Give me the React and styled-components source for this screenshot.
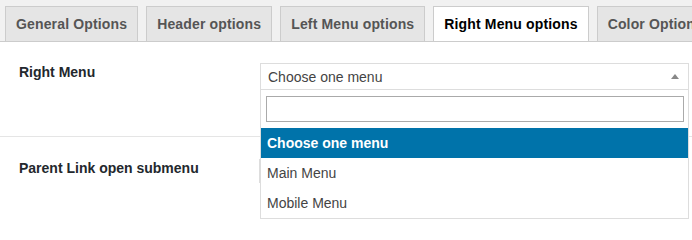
import React from 'react';
import styled, { createGlobalStyle } from 'styled-components';

const GlobalStyle = createGlobalStyle`
  body {
    margin: 0;
    background: #fff;
    font-family: "Liberation Sans", Arial, sans-serif;
    color: #444;
  }
`;

const TabBar = styled.div`
  display: flex;
  gap: 8px;
  padding: 6px 0 0 5px;
  background: #f1f1f1;
  border-bottom: 1px solid #ccc;
  white-space: nowrap;
  overflow: hidden;
`;

const Tab = styled.div`
  flex: none;
  padding: 5px 10px;
  margin-bottom: -1px;
  font-size: 14px;
  line-height: 24px;
  font-weight: 700;
  letter-spacing: 0.15px;
  color: ${p => (p.active ? '#000' : '#555')};
  background: ${p => (p.active ? '#fff' : '#e5e5e5')};
  border: 1px solid #ccc;
  border-bottom-color: ${p => (p.active ? '#fff' : '#ccc')};
`;

const Row = styled.div`
  display: grid;
  grid-template-columns: 241px 1fr;
  align-items: start;
  height: ${p => p.height}px;
  padding: 21px 0 0 19px;
  box-sizing: border-box;
  border-bottom: ${p => (p.last ? 'none' : '1px solid #e5e5e5')};
`;

const Label = styled.div`
  font-size: 14px;
  line-height: 18px;
  font-weight: 700;
  color: #23282d;
  padding-top: ${p => p.offset || 0}px;
`;

const SelectWrap = styled.div`
  position: relative;
  width: 429px;
`;

const Selection = styled.div`
  display: flex;
  align-items: center;
  justify-content: space-between;
  height: 27px;
  box-sizing: border-box;
  padding: 0 9px 0 7px;
  border: 1px solid #ddd;
  font-size: 14px;
  color: #444;
`;

const Arrow = styled.span`
  width: 0;
  height: 0;
  border-left: 4px solid transparent;
  border-right: 4px solid transparent;
  border-bottom: 5px solid #888;
`;

const Dropdown = styled.div`
  position: absolute;
  top: 100%;
  left: 0;
  right: 0;
  z-index: 5;
  background: #fff;
  border: 1px solid #ddd;
  border-top: none;
`;

const SearchBox = styled.div`
  padding: 6px 4px 6px 5px;
`;

const SearchInput = styled.input`
  display: block;
  width: 100%;
  height: 26px;
  box-sizing: border-box;
  border: 1px solid #aaa;
  outline: none;
  font: inherit;
`;

const Option = styled.div`
  height: 30px;
  box-sizing: border-box;
  padding: 6px;
  font-size: 14px;
  line-height: 18px;
  font-weight: ${p => (p.highlighted ? 700 : 400)};
  color: ${p => (p.highlighted ? '#fff' : '#444')};
  background: ${p => (p.highlighted ? '#0073aa' : '#fff')};
`;

const PlainControl = styled.div`
  margin: 1px 0 0 -1px;
  width: 300px;
  height: 22px;
  border: 1px solid #ddd;
  background: #fff;
`;

const tabs = ['General Options', 'Header options', 'Left Menu options', 'Right Menu options', 'Color Options'];
const menus = ['Choose one menu', 'Main Menu', 'Mobile Menu'];

const App = () => (
  <>
    <GlobalStyle />
    <TabBar>
      {tabs.map(t => (
        <Tab key={t} active={t === 'Right Menu options'}>{t}</Tab>
      ))}
    </TabBar>
    <Row height={95}>
      <Label>Right Menu</Label>
      <SelectWrap>
        <Selection>
          <span>Choose one menu</span>
          <Arrow />
        </Selection>
        <Dropdown>
          <SearchBox>
            <SearchInput type="text" />
          </SearchBox>
          {menus.map((m, i) => (
            <Option key={m} highlighted={i === 0}>{m}</Option>
          ))}
        </Dropdown>
      </SelectWrap>
    </Row>
    <Row height={92} last>
      <Label offset={1}>Parent Link open submenu</Label>
      <PlainControl />
    </Row>
  </>
);

export default App;
